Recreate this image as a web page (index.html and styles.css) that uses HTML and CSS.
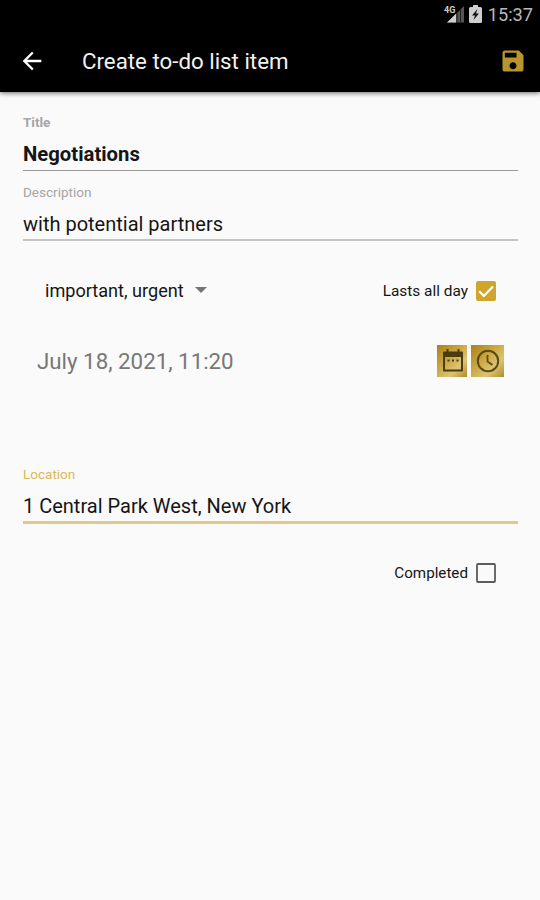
FILE: index.html
```html
<!DOCTYPE html>
<html lang="en">
<head>
    <meta charset="UTF-8">
    <meta name="viewport" content="width=device-width, initial-scale=1.0">
    <title>Create to-do list item</title>
    <link rel="stylesheet" href="styles.css">
</head>
<body>
    <header class="header">
        <div class="status-bar">
            <svg class="signal" width="20" height="18" viewBox="0 0 20 18">
                <path d="M3 17.500L20 1v16.500z" fill="#555"/>
                <path d="M3 17.500L12 8.800v8.700z" fill="#d0d0d0"/>
                <path d="M13 8v9.500M16.500 4v13.500" stroke="#222" stroke-width="1"/>
                <text x="0" y="8" class="signal-text">4G</text>
            </svg>
            <svg class="battery" width="13" height="18" viewBox="0 0 13 18">
                <path d="M4 0h5v2h2.500q1.500 0 1.500 1.500v13q0 1.500-1.500 1.500h-10Q0 18 0 16.500v-13Q0 2 1.500 2H4z" fill="#cfcfcf"/>
                <path d="M8.500 4L3 10.500h3L4.500 15 10 8.500H7z" fill="#111"/>
            </svg>
            <span class="clock">15:37</span>
        </div>
        <div class="app-bar">
            <svg class="back" width="28" height="28" viewBox="0 0 24 24" fill="#fff">
                <path d="M20 11H7.830l5.590-5.590L12 4l-8 8 8 8 1.410-1.410L7.830 13H20v-2z"/>
            </svg>
            <h1>Create to-do list item</h1>
            <svg class="save" width="28" height="28" viewBox="0 0 24 24" fill="#b8962e">
                <path d="M17 3H5c-1.110 0-2 .9-2 2v14c0 1.100.89 2 2 2h14c1.100 0 2-.9 2-2V7l-4-4zm-5 16c-1.660 0-3-1.340-3-3s1.340-3 3-3 3 1.340 3 3-1.340 3-3 3zm3-10H5V5h10v4z"/>
            </svg>
        </div>
    </header>

    <form class="todo-form">
        <div class="field title">
            <label>Title</label>
            <p>Negotiations</p>
        </div>
        <div class="field description">
            <label>Description</label>
            <p>with potential partners</p>
        </div>

        <div class="row options">
            <div class="dropdown">
                <span>important, urgent</span>
                <i class="caret"></i>
            </div>
            <div class="check">
                <span class="all-day">Lasts all day</span>
                <svg width="20" height="20" viewBox="0 0 20 20">
                    <rect width="20" height="20" rx="2" fill="#d0a52d"/>
                    <path d="M3.200 10.300l4.600 4.600 9.200-9.400" fill="none" stroke="#fff" stroke-width="2.200"/>
                </svg>
            </div>
        </div>

        <div class="row date-row">
            <span class="date">July 18, 2021, 11:20</span>
            <div class="date-buttons">
                <div class="gold-btn calendar">
                    <svg width="22" height="25" viewBox="0 0 22 25">
                        <path d="M2 4.500h18v18H2z" fill="none" stroke="#4a3c10" stroke-width="2" stroke-linejoin="round"/>
                        <path d="M1 4h20v5H1z" fill="#4a3c10"/>
                        <path d="M5.500 1v4M16.500 1v4" stroke="#4a3c10" stroke-width="2"/>
                        <path d="M5.500 12.500h2M10 12.500h2M14.500 12.500h2" stroke="#4a3c10" stroke-width="2"/>
                    </svg>
                </div>
                <div class="gold-btn time">
                    <svg width="24" height="24" viewBox="0 0 24 24" fill="none" stroke="#5c4a14">
                        <circle cx="12" cy="12" r="10.200" stroke-width="2"/>
                        <path d="M11.500 6v6.500l5 3.500" stroke-width="1.800"/>
                    </svg>
                </div>
            </div>
        </div>

        <div class="field location">
            <label>Location</label>
            <p>1 Central Park West, New York</p>
        </div>

        <div class="row completed-row">
            <div class="check">
                <span class="completed">Completed</span>
                <svg width="20" height="20" viewBox="0 0 20 20">
                    <rect x="1" y="1" width="18" height="18" rx="1" fill="none" stroke="#5c5c5c" stroke-width="1.800"/>
                </svg>
            </div>
        </div>
    </form>
</body>
</html>
```
FILE: styles.css
```css
* {
    box-sizing: border-box;
}
body {
    margin: 0;
    height: 900px;
    overflow: hidden;
    background: #fafafa;
    color: #151515;
    font-family: Roboto, "Liberation Sans", sans-serif;
}
.header {
    height: 92px;
    background: #000;
    box-shadow: 0 1px 5px rgba(0, 0, 0, 0.6);
}
.status-bar {
    display: flex;
    align-items: center;
    justify-content: flex-end;
    height: 30px;
    padding: 0 7px 2px 0;
    color: #b8b8b8;
}
.signal {
    overflow: visible;
}
.signal-text {
    font-size: 9px;
    font-weight: bold;
    fill: #d0d0d0;
}
.battery {
    margin-left: 5px;
}
.clock {
    margin-left: 6px;
    font-size: 18.200px;
    line-height: 28px;
    padding-top: 1px;
}
.app-bar {
    display: flex;
    align-items: center;
    height: 62px;
    padding: 0 13px 0 18px;
}
h1 {
    flex: 1;
    margin: 0 0 0 36px;
    color: #f2f2f2;
    font-size: 22.300px;
    font-weight: normal;
    line-height: 28px;
    padding-bottom: 1px;
}
.todo-form {
    padding: 22px 22px 0 23px;
}
.field {
    height: 70px;
}
.field label {
    display: block;
    height: 16px;
    color: #a5a5a5;
    font-size: 13.500px;
    line-height: 16px;
}
.field p {
    height: 41px;
    margin: 0;
    padding-top: 12px;
    border-bottom: 1px solid #999;
    font-size: 20px;
    line-height: 24px;
}
.title label,
.title p {
    font-weight: bold;
}
.title p {
    font-size: 20.300px;
}
.description p {
    border-bottom: 2px solid #c4c4c4;
}
.row {
    display: flex;
    align-items: center;
    justify-content: space-between;
}
.options {
    height: 40px;
    margin-top: 17px;
    padding: 0 22px 0 22px;
}
.dropdown,
.check {
    display: flex;
    align-items: center;
}
.dropdown {
    padding-bottom: 2px;
    font-size: 18.100px;
}
.caret {
    margin: 0 0 1px 11px;
    border: 6px solid transparent;
    border-top-color: #757575;
    border-bottom: 0;
}
.check {
    font-size: 15.400px;
}
.check svg {
    margin-left: 8px;
}
.date-row {
    height: 32px;
    margin-top: 34px;
    padding: 0 14px 0 14px;
}
.date {
    color: #777;
    font-size: 22.300px;
    padding-bottom: 1px;
}
.date-buttons {
    display: flex;
    gap: 4px;
}
.gold-btn {
    display: flex;
    align-items: center;
    justify-content: center;
    width: 30px;
    height: 32px;
    padding-bottom: 1px;
    background: linear-gradient(135deg, #a8831d 0%, #c9a640 40%, #dcc473 70%, #b08d27 100%);
}
.calendar {
    padding-left: 2px;
}
.time {
    width: 33px;
}
.location {
    height: 58px;
    margin-top: 89px;
}
.location label {
    color: #dcb75a;
}
.location p {
    height: 42px;
    border-bottom: 3px solid #dfc988;
}
.completed-row {
    justify-content: flex-end;
    height: 40px;
    margin-top: 29px;
    padding-right: 22px;
}
.completed {
    font-size: 15.200px;
}
```
